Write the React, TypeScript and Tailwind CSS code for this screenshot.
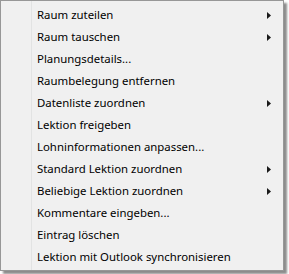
const items: { label: string; sub?: boolean }[] = [
  { label: "Raum zuteilen", sub: true },
  { label: "Raum tauschen", sub: true },
  { label: "Planungsdetails..." },
  { label: "Raumbelegung entfernen" },
  { label: "Datenliste zuordnen", sub: true },
  { label: "Lektion freigeben" },
  { label: "Lohninformationen anpassen..." },
  { label: "Standard Lektion zuordnen", sub: true },
  { label: "Beliebige Lektion zuordnen", sub: true },
  { label: "Kommentare eingeben..." },
  { label: "Eintrag löschen" },
  { label: "Lektion mit Outlook synchronisieren" },
];

function Arrow() {
  return (
    <svg width="4" height="7" viewBox="0 0 4 7" className="shrink-0">
      <path d="M0 0 L4 3.5 L0 7 Z" fill="#1a1a1a" />
    </svg>
  );
}

export default function App() {
  return (
    <div className="w-[289px] h-[274px] bg-white">
      <div
        className="relative w-[284px] h-[271px] border border-[#979797] bg-[#f0f0f0] pt-[3px] pb-[2px] shadow-[3px_3px_2px_rgba(0,0,0,0.45)] text-[11.4px] text-black"
        style={{ fontFamily: '"Segoe UI", "Noto Sans", sans-serif' }}
      >
        {/* icon column separator */}
        <div className="absolute top-0 bottom-0 left-[30px] w-[2px] border-l border-[#e2e3e3] border-r-white" />
        {items.map((it) => (
          <div key={it.label} className="flex items-center h-[22px] pl-[36px] pr-[12px]">
            <span className="flex-1 leading-none">{it.label}</span>
            {it.sub && <Arrow />}
          </div>
        ))}
      </div>
    </div>
  );
}
